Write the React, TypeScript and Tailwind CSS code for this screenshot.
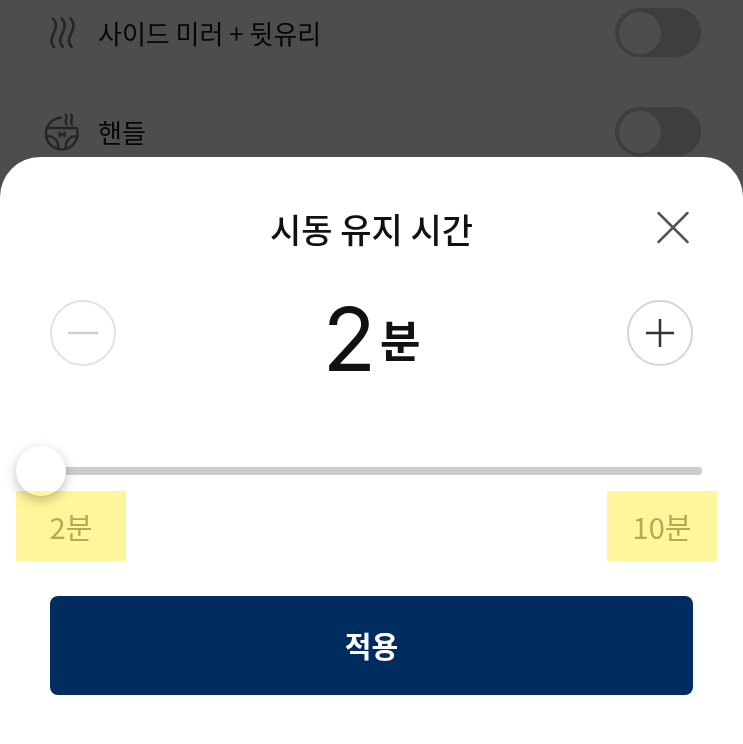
import { useState } from 'react';
import type { ReactNode } from 'react';

const MIN_MINUTES = 2;
const MAX_MINUTES = 10;

function HeatIcon() {
  return (
    <svg width="36" height="40" viewBox="0 0 36 40" fill="none" stroke="#262626" strokeWidth="2.6" strokeLinecap="round">
      <path d="M9 5.500 C12 9 13 12 11 17 C9 22 4.500 28 10 34" />
      <path d="M17.800 5.500 C20.800 9 21.800 12 19.800 17 C17.800 22 13.300 28 18.800 34" />
      <path d="M26.600 5.500 C29.600 9 30.600 12 28.600 17 C26.600 22 22.100 28 27.600 34" />
    </svg>
  );
}

function SteeringWheelIcon() {
  return (
    <svg width="36" height="40" viewBox="0 0 36 40" fill="none" stroke="#262626" strokeWidth="2.5" strokeLinecap="round">
      <path d="M17 5.800 A15.800 15.800 0 1 0 32.500 16 H3.500" strokeLinejoin="round" />
      <path d="M2.800 24.500 C9 23.500 14.500 28 14.500 36.500" />
      <path d="M33 24.500 C27 23.500 21.500 28 21.500 36.500" />
      <path d="M15.500 20.800 V24.200 M20.500 20.800 V24.200 M15.500 22.500 H20.500" strokeWidth="2.4" />
      <path d="M21.500 2.500 C25 6 19.500 8.500 22.500 12.500" strokeWidth="2.4" />
      <path d="M27 2.500 C30.500 6 25 8.500 28 12.500" strokeWidth="2.4" />
    </svg>
  );
}

interface HeatOptionProps {
  id: string;
  label: string;
  icon: ReactNode;
}

function HeatOption({ id, label, icon }: HeatOptionProps) {
  return (
    <div className="flex h-[49px] items-center justify-between">
      <label htmlFor={id} className="flex items-center gap-[18px] text-[26px] leading-[34px] text-[#070707]">
        {icon}
        {label}
      </label>
      <input
        id={id}
        type="checkbox"
        role="switch"
        className="flex h-[49px] w-[86px] appearance-none items-center rounded-full bg-[#3e3e3e] px-1 before:size-[42px] before:rounded-full before:bg-[#4d4d4d] checked:justify-end"
      />
    </div>
  );
}

export default function App() {
  const [minutes, setMinutes] = useState(MIN_MINUTES);

  return (
    <div className="flex min-h-screen flex-col bg-[#4d4d4d] font-['Noto_Sans_CJK_KR',sans-serif]">
      {/* Dimmed list behind the sheet */}
      <div className="flex flex-col gap-[50px] pt-2 pr-[42px] pb-px pl-11">
        <HeatOption id="mirror" label="사이드 미러 + 뒷유리" icon={<HeatIcon />} />
        <HeatOption id="wheel" label="핸들" icon={<SteeringWheelIcon />} />
      </div>

      {/* Bottom sheet */}
      <section
        role="dialog"
        aria-labelledby="sheet-title"
        className="flex-1 rounded-t-[40px] bg-white pt-10 pb-12 text-[#111]"
      >
        <header className="grid h-16 grid-cols-[1fr_auto_1fr] items-center px-[50px]">
          <h1 id="sheet-title" className="col-start-2 text-[34px] leading-[48px] font-medium">
            시동 유지 시간
          </h1>
          <button type="button" aria-label="닫기" className="justify-self-end">
            <svg width="40" height="40" viewBox="0 0 40 40" fill="none" stroke="#555" strokeWidth="2.5" strokeLinecap="round">
              <path d="M5.500 4 L34.500 33 M34.500 4 L5.500 33" />
            </svg>
          </button>
        </header>

        <div className="mt-6 flex h-24 items-center justify-between px-[50px]">
          <button
            type="button"
            aria-label="시간 줄이기"
            disabled={minutes === MIN_MINUTES}
            onClick={() => setMinutes(minutes - 1)}
            className="flex size-[66px] items-center justify-center rounded-full border-2 border-[#d5d5d8] text-[#333] disabled:border-[#e2e2e2] disabled:text-[#ccc]"
          >
            <svg width="32" height="32" viewBox="0 0 32 32" stroke="currentColor" strokeWidth="2.5">
              <path d="M1 16 H31" />
            </svg>
          </button>
          <p className="flex items-end gap-1">
            <span className="pt-3 font-[Inter,sans-serif] text-[88px] leading-[96px]">{minutes}</span>
            <span className="text-[44px] leading-[96px] font-bold">분</span>
          </p>
          <button
            type="button"
            aria-label="시간 늘리기"
            disabled={minutes === MAX_MINUTES}
            onClick={() => setMinutes(minutes + 1)}
            className="flex size-[66px] items-center justify-center rounded-full border-2 border-[#d5d5d8] text-[#333] disabled:border-[#e2e2e2] disabled:text-[#ccc]"
          >
            <svg width="32" height="32" viewBox="0 0 32 32" stroke="currentColor" strokeWidth="2.5">
              <path d="M2 16 H30 M16 2 V30" />
            </svg>
          </button>
        </div>

        <div className="mt-[65px] pr-[41px] pl-4">
          <input
            type="range"
            aria-label="시동 유지 시간"
            min={MIN_MINUTES}
            max={MAX_MINUTES}
            value={minutes}
            onChange={(e) => setMinutes(Number(e.target.value))}
            className="block h-[50px] w-full appearance-none bg-transparent [&::-webkit-slider-runnable-track]:h-2 [&::-webkit-slider-runnable-track]:rounded-full [&::-webkit-slider-runnable-track]:bg-[#cdcdcf] [&::-webkit-slider-thumb]:-mt-[21px] [&::-webkit-slider-thumb]:size-[50px] [&::-webkit-slider-thumb]:appearance-none [&::-webkit-slider-thumb]:rounded-full [&::-webkit-slider-thumb]:bg-white [&::-webkit-slider-thumb]:shadow-[0_4px_12px_rgba(0,0,0,0.25)]"
          />
        </div>

        {/* Highlighted range limits */}
        <div className="-mt-[5px] flex justify-between pr-[26px] pl-4 text-[29px] leading-[70px] text-[#b6aa4c]">
          <mark className="w-[110px] bg-[#fff59b] text-center text-inherit mix-blend-multiply">{MIN_MINUTES}분</mark>
          <mark className="w-[110px] bg-[#fff59b] text-center text-inherit mix-blend-multiply">{MAX_MINUTES}분</mark>
        </div>

        <div className="mt-[35px] px-[50px]">
          <button type="button" className="h-[99px] w-full rounded-lg bg-[#002c5f] text-[29px] font-bold text-white">
            적용
          </button>
        </div>
      </section>
    </div>
  );
}
